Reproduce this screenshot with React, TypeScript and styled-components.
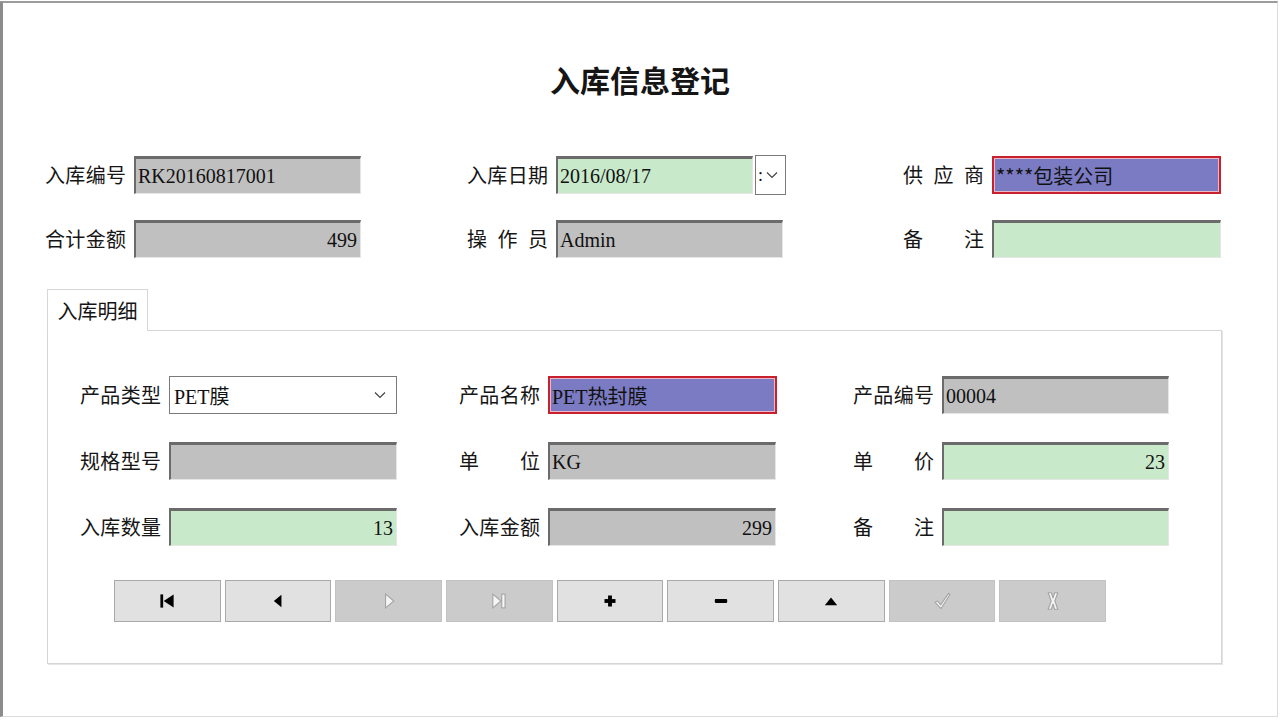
import React from 'react';
import styled, { createGlobalStyle } from 'styled-components';

const Global = createGlobalStyle`
  html, body { margin: 0; padding: 0; background: #fff; }
  body { font-family: "Noto Sans CJK SC", "Noto Sans", sans-serif; color: #141414; }
`;

const Window = styled.div`
  width: 1278px;
  height: 716px;
  margin-top: 1px;
  box-sizing: border-box;
  border-top: 2px solid #9c9c9c;
  border-left: 3px solid #8c8c8c;
  border-right: 1px solid #dcdcdc;
  border-bottom: 1px solid #dcdcdc;
  background: #fff;
  display: flex;
  flex-direction: column;
`;

const Title = styled.h1`
  margin: 56px 0 0 0;
  height: 40px;
  line-height: 40px;
  text-align: center;
  font-size: 30px;
  font-weight: 700;
  color: #151515;
  letter-spacing: 0px;
`;

const HeaderGrid = styled.div`
  margin-top: 57px;
  padding-left: 42px;
  display: grid;
  grid-template-columns: 422px 436px 1fr;
  row-gap: 26px;
`;

const Field = styled.div`
  display: flex;
  align-items: center;
  gap: 8px;
  height: 38px;
`;

const LabelWrap = styled.div`
  width: 81px;
  display: flex;
  justify-content: space-between;
  font-size: 20px;
  line-height: 26px;
  color: #161616;
  flex: none;
`;

type Variant = 'grey' | 'green' | 'blue' | 'white';

const bgOf = (v: Variant) =>
  v === 'grey' ? '#c0c0c0' : v === 'green' ? '#c9e9cb' : v === 'blue' ? '#7b7bc3' : '#ffffff';

const Box = styled.div<{ $w: number; $v: Variant; $right?: boolean }>`
  width: ${p => p.$w}px;
  height: 38px;
  box-sizing: border-box;
  flex: none;
  background: ${p => bgOf(p.$v)};
  display: flex;
  align-items: center;
  justify-content: ${p => (p.$right ? 'flex-end' : 'flex-start')};
  padding: ${p => (p.$right ? '0 3px 0 0' : '0 0 0 2px')};
  font-family: "Liberation Serif", "Noto Sans CJK SC", serif;
  font-size: 20px;
  color: #111;
  white-space: nowrap;
  overflow: hidden;
  ${p =>
    p.$v === 'blue'
      ? `border: 2px solid #c8202c; box-shadow: inset 0 0 0 1px #e9b8c6;`
      : p.$v === 'white'
      ? `border: 1px solid #7a7a7a; padding-left: 4px; padding-right: 10px; justify-content: space-between;`
      : `border-top: 3px solid #6b6b6b; border-left: 2px solid #6b6b6b; border-right: 1px solid #e6e6e6; border-bottom: 1px solid #e6e6e6;`}
`;

const CjkText = styled.span`
  font-family: "Noto Sans CJK SC", sans-serif;
  font-size: 20px;
`;

const DateBtn = styled.div`
  width: 31px;
  height: 40px;
  box-sizing: border-box;
  border: 1px solid #7a7a7a;
  background: #fff;
  margin-left: -6px;
  display: flex;
  align-items: center;
  padding-left: 2px;
  gap: 3px;
  font-family: "Liberation Serif", serif;
  font-size: 18px;
  flex: none;
`;

const TabArea = styled.div`
  margin-top: 31px;
  margin-left: 44px;
  display: flex;
  flex-direction: column;
`;

const Tab = styled.div`
  width: 101px;
  height: 42px;
  box-sizing: border-box;
  border: 1px solid #d6d6d6;
  border-bottom: none;
  background: #fff;
  margin-bottom: -1px;
  position: relative;
  z-index: 1;
  display: flex;
  align-items: center;
  justify-content: center;
  font-size: 20px;
`;

const Panel = styled.div`
  width: 1175px;
  height: 334px;
  box-sizing: border-box;
  border: 1px solid #d4d4d4;
  box-shadow: 1px 1px 0 #e6e6e6;
  padding: 45px 0 0 32px;
  display: flex;
  flex-direction: column;
`;

const DetailGrid = styled.div`
  display: grid;
  grid-template-columns: 379px 394px 1fr;
  row-gap: 28px;
`;

const ButtonBar = styled.div`
  margin-top: 34px;
  margin-left: 34px;
  width: 992px;
  height: 42px;
  display: grid;
  grid-template-columns: repeat(9, 1fr);
  gap: 4px;
`;

const NavButton = styled.div<{ $disabled?: boolean }>`
  box-sizing: border-box;
  height: 42px;
  background: ${p => (p.$disabled ? '#cbcbcb' : '#e1e1e1')};
  border: 1px solid ${p => (p.$disabled ? '#c2c2c2' : '#a9a9a9')};
  display: flex;
  align-items: center;
  justify-content: center;
`;

const Label: React.FC<{ text: string }> = ({ text }) => (
  <LabelWrap>
    {text.split('').map((c, i) => (
      <span key={i}>{c}</span>
    ))}
  </LabelWrap>
);

const Chevron: React.FC = () => (
  <svg width="12" height="8" viewBox="0 0 12 8">
    <polyline points="1,1.5 6,6.5 11,1.5" fill="none" stroke="#444" strokeWidth="1.2" />
  </svg>
);

const DIS_FILL = '#f6f6f6';
const DIS_STROKE = '#a3a3a3';
const S = 22;

const Icon: React.FC<{ kind: string }> = ({ kind }) => {
  switch (kind) {
    case 'first':
      return (
        <svg width={S} height={S} viewBox="0 0 16 16">
          <rect x="3.2" y="3.2" width="2" height="9.6" fill="#000" />
          <polygon points="12.8,3.2 12.8,12.8 5.6,8" fill="#000" />
        </svg>
      );
    case 'prev':
      return (
        <svg width={S} height={S} viewBox="0 0 16 16">
          <polygon points="10.5,3.5 10.5,12.5 5,8" fill="#000" />
        </svg>
      );
    case 'next':
      return (
        <svg width={S} height={S} viewBox="0 0 16 16">
          <polygon points="5.5,3 5.5,13 11.5,8" fill={DIS_FILL} stroke={DIS_STROKE} strokeWidth="0.8" />
        </svg>
      );
    case 'last':
      return (
        <svg width={S} height={S} viewBox="0 0 16 16">
          <polygon points="3.5,3 3.5,13 9.5,8" fill={DIS_FILL} stroke={DIS_STROKE} strokeWidth="0.8" />
          <rect x="10" y="3" width="2.4" height="10" fill={DIS_FILL} stroke={DIS_STROKE} strokeWidth="0.8" />
        </svg>
      );
    case 'plus':
      return (
        <svg width={S} height={S} viewBox="0 0 16 16">
          <rect x="4" y="6.6" width="8" height="2.8" fill="#000" />
          <rect x="6.6" y="4" width="2.8" height="8" fill="#000" />
        </svg>
      );
    case 'minus':
      return (
        <svg width={S} height={S} viewBox="0 0 16 16">
          <rect x="3.5" y="6.6" width="9" height="2.8" rx="0.6" fill="#000" />
        </svg>
      );
    case 'edit':
      return (
        <svg width={S} height={S} viewBox="0 0 16 16">
          <polygon points="3.5,11 12.5,11 8,5.5" fill="#000" />
        </svg>
      );
    case 'post':
      return (
        <svg width={S} height={S} viewBox="0 0 16 16">
          <path
            d="M3,9 L4.8,8 L7,10.8 L12.8,2.5 L13.8,3.3 L7.3,13.5 Z"
            fill={DIS_FILL}
            stroke={DIS_STROKE}
            strokeWidth="0.8"
            strokeLinejoin="round"
          />
        </svg>
      );
    case 'cancel':
      return (
        <svg width={S} height={S} viewBox="0 0 16 16">
          <path
            d="M4.5,2 L6.8,2 L8,5.8 L9.2,2 L11.5,2 L9.3,8 L11.5,14 L9.2,14 L8,10.2 L6.8,14 L4.5,14 L6.7,8 Z"
            fill={DIS_FILL}
            stroke={DIS_STROKE}
            strokeWidth="0.8"
            strokeLinejoin="round"
          />
        </svg>
      );
    default:
      return null;
  }
};

const buttons: { kind: string; disabled?: boolean }[] = [
  { kind: 'first' },
  { kind: 'prev' },
  { kind: 'next', disabled: true },
  { kind: 'last', disabled: true },
  { kind: 'plus' },
  { kind: 'minus' },
  { kind: 'edit' },
  { kind: 'post', disabled: true },
  { kind: 'cancel', disabled: true },
];

export default function App() {
  return (
    <>
      <Global />
      <Window>
        <Title>入库信息登记</Title>
        <HeaderGrid>
          <Field>
            <Label text="入库编号" />
            <Box $w={227} $v="grey">RK20160817001</Box>
          </Field>
          <Field>
            <Label text="入库日期" />
            <Box $w={197} $v="green">2016/08/17</Box>
            <DateBtn>
              <span>:</span>
              <Chevron />
            </DateBtn>
          </Field>
          <Field>
            <Label text="供应商" />
            <Box $w={229} $v="blue">
              <CjkText>****包装公司</CjkText>
            </Box>
          </Field>
          <Field>
            <Label text="合计金额" />
            <Box $w={227} $v="grey" $right>499</Box>
          </Field>
          <Field>
            <Label text="操作员" />
            <Box $w={227} $v="grey">Admin</Box>
          </Field>
          <Field>
            <Label text="备注" />
            <Box $w={229} $v="green" />
          </Field>
        </HeaderGrid>

        <TabArea>
          <Tab>入库明细</Tab>
          <Panel>
            <DetailGrid>
              <Field>
                <Label text="产品类型" />
                <Box $w={228} $v="white">
                  <span>PET膜</span>
                  <Chevron />
                </Box>
              </Field>
              <Field>
                <Label text="产品名称" />
                <Box $w={229} $v="blue">PET热封膜</Box>
              </Field>
              <Field>
                <Label text="产品编号" />
                <Box $w={227} $v="grey">00004</Box>
              </Field>
              <Field>
                <Label text="规格型号" />
                <Box $w={228} $v="grey" />
              </Field>
              <Field>
                <Label text="单位" />
                <Box $w={228} $v="grey">KG</Box>
              </Field>
              <Field>
                <Label text="单价" />
                <Box $w={227} $v="green" $right>23</Box>
              </Field>
              <Field>
                <Label text="入库数量" />
                <Box $w={228} $v="green" $right>13</Box>
              </Field>
              <Field>
                <Label text="入库金额" />
                <Box $w={228} $v="grey" $right>299</Box>
              </Field>
              <Field>
                <Label text="备注" />
                <Box $w={227} $v="green" />
              </Field>
            </DetailGrid>
            <ButtonBar>
              {buttons.map(b => (
                <NavButton key={b.kind} $disabled={b.disabled}>
                  <Icon kind={b.kind} />
                </NavButton>
              ))}
            </ButtonBar>
          </Panel>
        </TabArea>
      </Window>
    </>
  );
}
